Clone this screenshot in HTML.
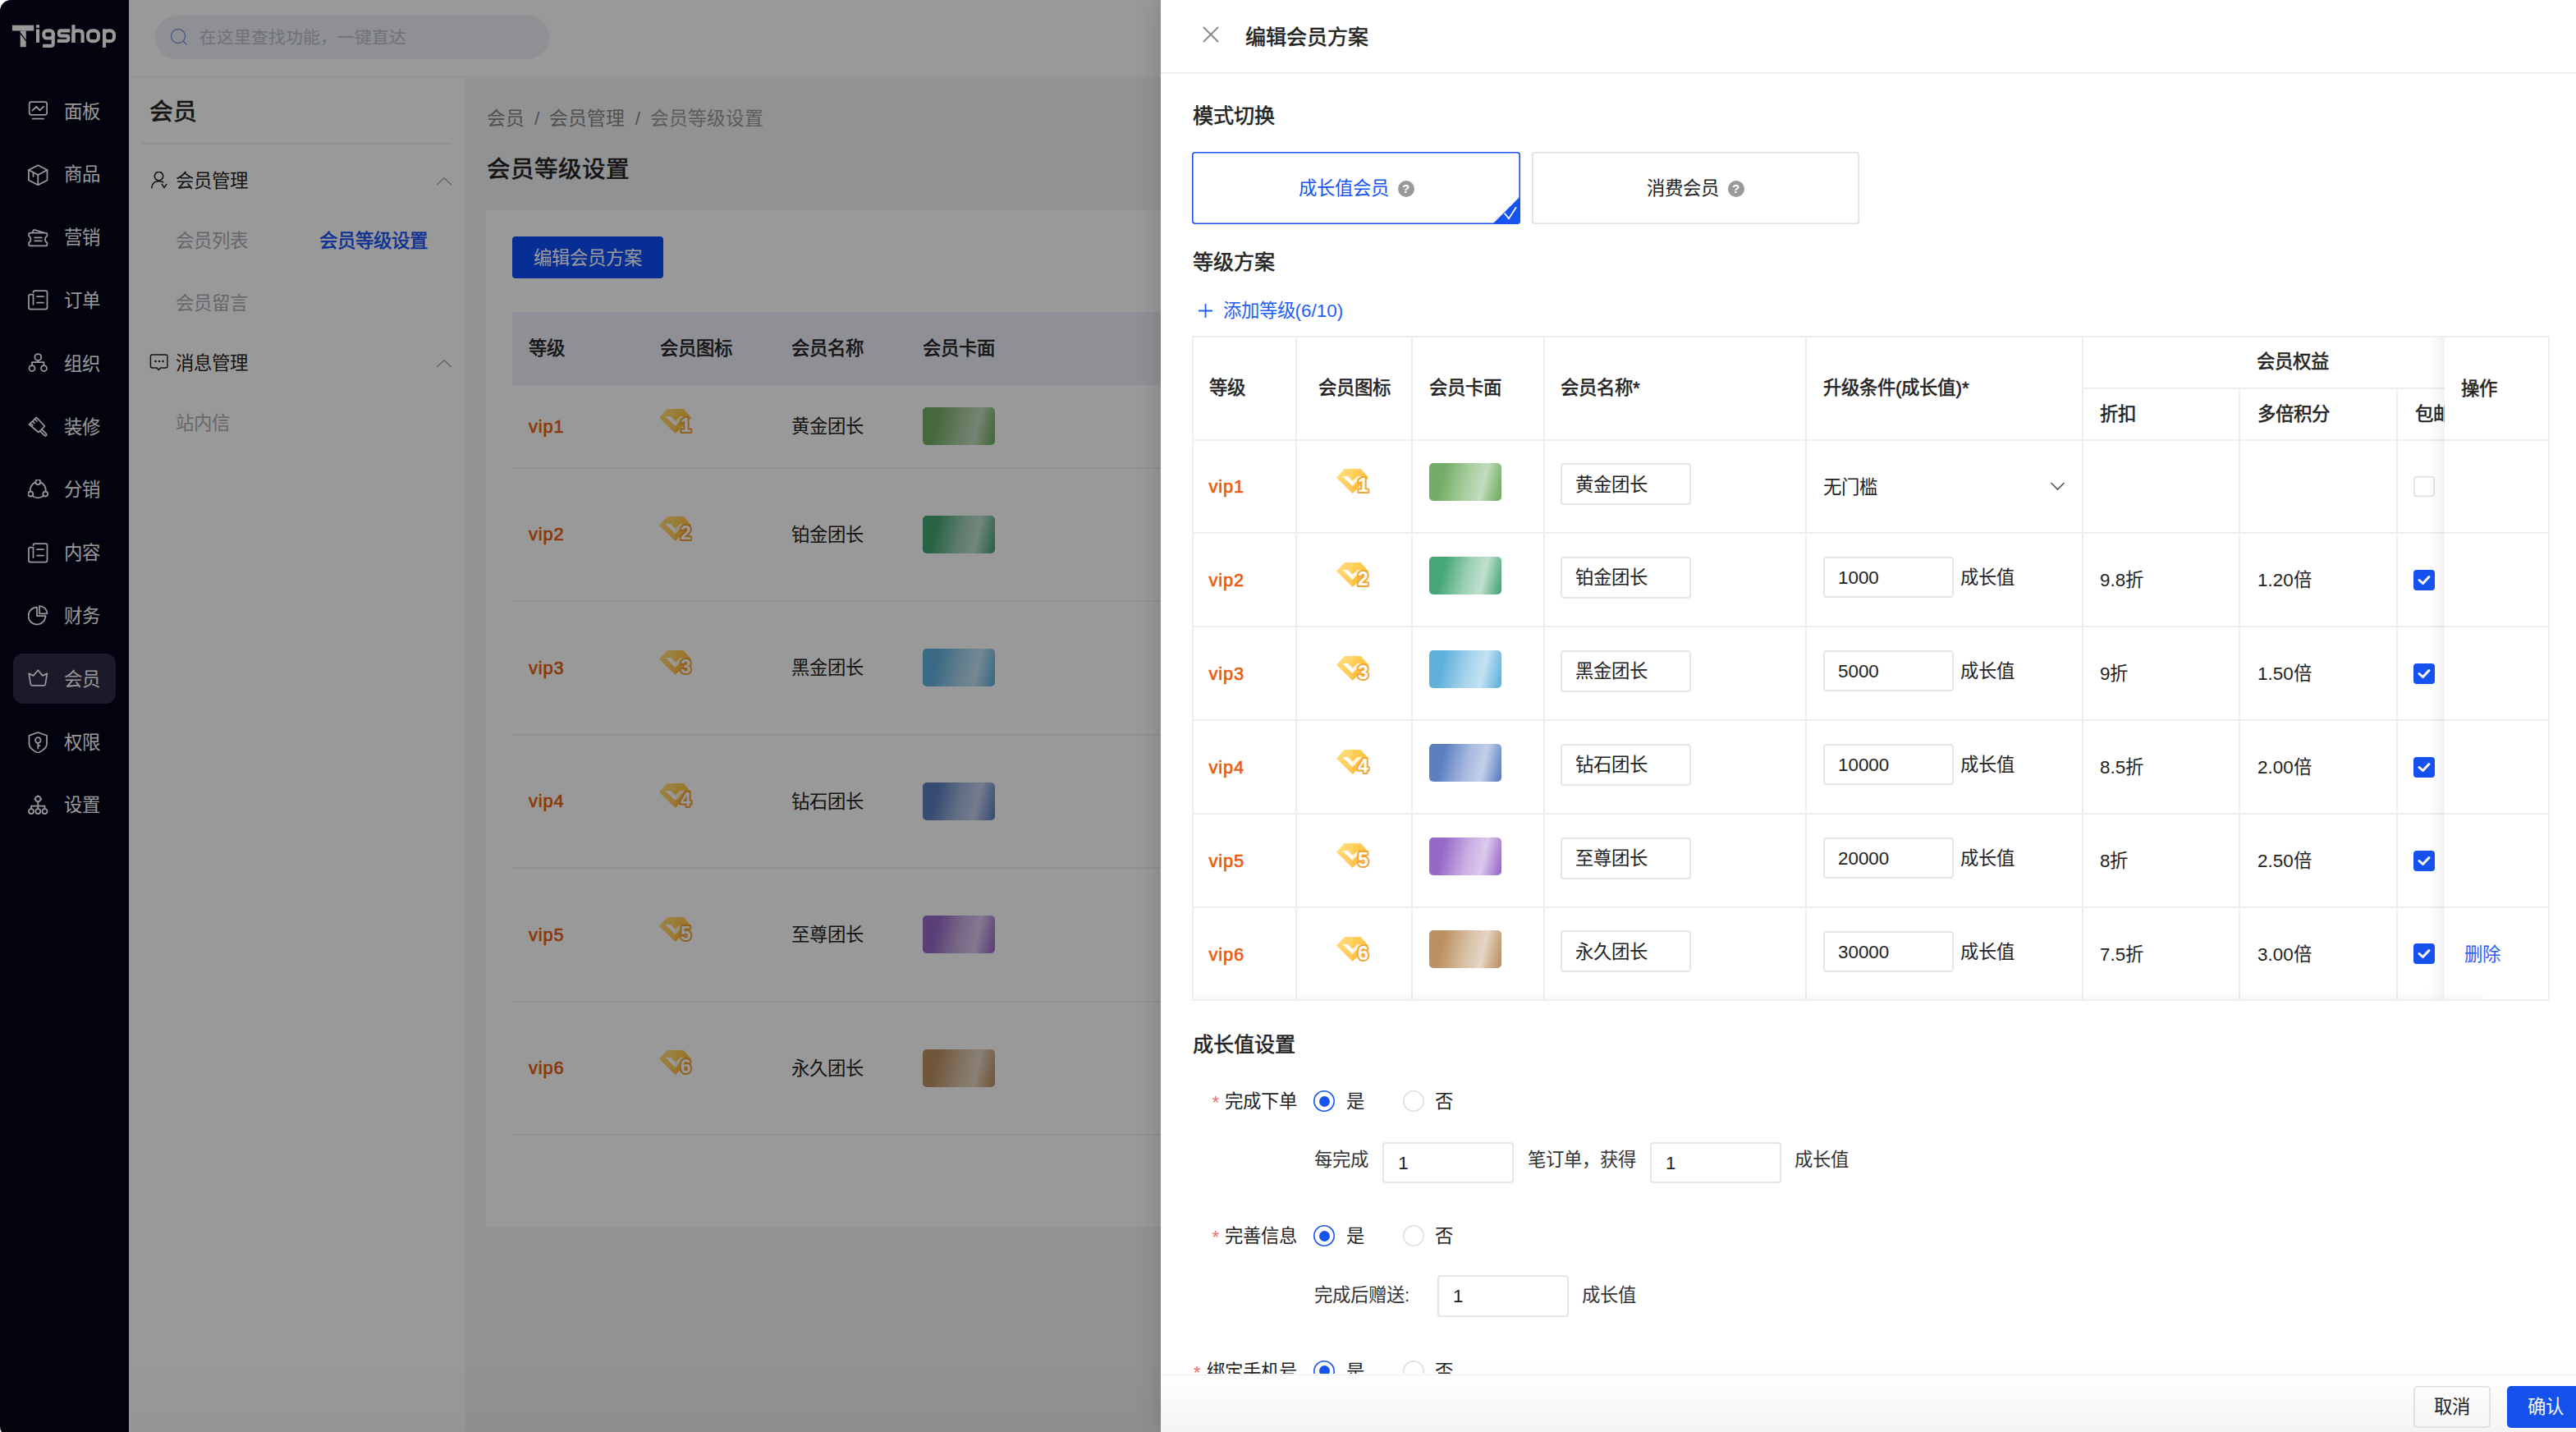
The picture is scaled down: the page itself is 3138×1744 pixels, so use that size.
<!DOCTYPE html><html lang="zh-CN"><head><meta charset="utf-8"><title>Tigshop</title><style>
*{margin:0;padding:0;box-sizing:border-box}
html,body{width:3138px;height:1744px;overflow:hidden;background:#fff}
body{font-family:"Liberation Sans",sans-serif;position:relative}
.t{position:absolute;white-space:nowrap}
.abs{position:absolute}
#app{position:absolute;left:0;top:0;width:3138px;height:1750px;overflow:hidden;border-top-left-radius:13.5px;border-bottom-left-radius:13.25px;background:#fff}
</style></head><body>
<svg width="0" height="0" style="position:absolute"><defs><linearGradient id="gemg" x1="0" y1="0" x2="1" y2="1"><stop offset="0" stop-color="#ffdc6a"/><stop offset="1" stop-color="#ffb22e"/></linearGradient></defs></svg>
<div id="app">
<div class="abs" style="left:0;top:0;width:157px;height:1744px;background:#050419"></div>
<svg class="abs" style="left:0;top:0" width="157" height="70" viewBox="0 0 157 70"><g fill="#fff"><rect x="14.9" y="30.7" width="26.35" height="6.8"/><rect x="24.7" y="37.4" width="7" height="19.8"/><rect x="44" y="30.2" width="4.1" height="3.6"/><rect x="44" y="35.4" width="4.1" height="16.5"/><rect x="87.4" y="30.2" width="4.1" height="21.7"/><rect x="125" y="35.3" width="4.1" height="22.6"/></g><path d="M24.4 39.9 L31.9 49.9" stroke="#050419" stroke-width="1.3"/><g fill="none" stroke="#fff" stroke-width="4.1"><rect x="53.35" y="37.35" width="11.4" height="9.2" rx="3.5"/><path d="M64.75 40 V53.5 Q64.75 55.85 62.4 55.85 H52.1"/><path d="M85.3 37.35 H74.2 Q71.85 37.35 71.85 39.7 V41.3 Q71.85 43.6 74.2 43.6 H80.9 Q83.25 43.6 83.25 45.9 V47.5 Q83.25 49.85 80.9 49.85 H69.8"/><path d="M89.45 51.9 V41.6 Q89.45 37.35 93.7 37.35 H96.4 Q100.65 37.35 100.65 41.6 V51.9"/><rect x="107.15" y="37.35" width="12.8" height="12.8" rx="5"/><rect x="127.05" y="37.35" width="11.9" height="12.8" rx="5"/></g></svg>
<svg class="abs" style="left:34px;top:123.0px" width="25" height="26" viewBox="0 0 25 26" fill="none" stroke="#fff" stroke-width="1.75" stroke-linecap="round" stroke-linejoin="round"><rect x="1.7" y="1.05" width="21.45" height="15.8" rx="2.5"/><path d="M5.5 11.6 L10.3 6.8 L14.5 11.3 L19.1 6.8"/><path d="M5.7 21.7 H19.1"/></svg>
<div class="t" style="left:77.5px;top:116.6px;line-height:40px;font-size:22.4px;color:#fff;font-weight:400;">面板</div>
<svg class="abs" style="left:34px;top:199.8px" width="25" height="26" viewBox="0 0 25 26" fill="none" stroke="#fff" stroke-width="1.75" stroke-linecap="round" stroke-linejoin="round"><path d="M12.3 1.2 L23.5 7 V19.5 L12.3 25.3 L1 19.5 V7 Z"/><path d="M1 7 L12.3 13 L23.5 7"/><path d="M12.3 13 V25.3"/><path d="M6.5 10 V15"/></svg>
<div class="t" style="left:77.5px;top:193.4px;line-height:40px;font-size:22.4px;color:#fff;font-weight:400;">商品</div>
<svg class="abs" style="left:34px;top:276.6px" width="25" height="26" viewBox="0 0 25 26" fill="none" stroke="#fff" stroke-width="1.75" stroke-linecap="round" stroke-linejoin="round"><path d="M3 6.6 H21.5 Q23.4 6.6 23.4 8.6 V10.5 Q21 11.6 21 14.5 Q21 17.4 23.4 18.5 V20.4 Q23.4 22.4 21.5 22.4 H3 Q1.1 22.4 1.1 20.4 V18.5 Q3.5 17.4 3.5 14.5 Q3.5 11.6 1.1 10.5 V8.6 Q1.1 6.6 3 6.6 Z"/><path d="M8.2 12.4 H16.8 M8.2 16.3 H16.8"/><path d="M5.6 6.2 Q6.3 2.8 8.4 3 L19.5 6.4"/></svg>
<div class="t" style="left:77.5px;top:270.20000000000005px;line-height:40px;font-size:22.4px;color:#fff;font-weight:400;">营销</div>
<svg class="abs" style="left:34px;top:353.4px" width="25" height="26" viewBox="0 0 25 26" fill="none" stroke="#fff" stroke-width="1.75" stroke-linecap="round" stroke-linejoin="round"><path d="M6.5 3 Q6.5 1 8.5 1 H21.5 Q23.5 1 23.5 3 V21.5 Q23.5 23.5 21.5 23.5 H3 Q1 23.5 1 21.5 V7.5 Q1 5.5 3 5.5 H6.5 V18"/><path d="M11 8.2 H19 M11 15.5 H19"/></svg>
<div class="t" style="left:77.5px;top:347.0px;line-height:40px;font-size:22.4px;color:#fff;font-weight:400;">订单</div>
<svg class="abs" style="left:34px;top:430.2px" width="25" height="26" viewBox="0 0 25 26" fill="none" stroke="#fff" stroke-width="1.75" stroke-linecap="round" stroke-linejoin="round"><circle cx="12.3" cy="5" r="4"/><circle cx="5" cy="18.5" r="3.5"/><circle cx="19.5" cy="18.5" r="3.5"/><path d="M12.3 9 V11 M5 15 V11 H19.5 V15"/></svg>
<div class="t" style="left:77.5px;top:423.8px;line-height:40px;font-size:22.4px;color:#fff;font-weight:400;">组织</div>
<svg class="abs" style="left:34px;top:507.0px" width="25" height="26" viewBox="0 0 25 26" fill="none" stroke="#fff" stroke-width="1.75" stroke-linecap="round" stroke-linejoin="round"><path d="M10.5 1.5 L20.5 12 L13 19.5 L1.5 9.8 Z"/><path d="M6 6.5 L8 8.5 M9 4 L11 6 M3.8 9.2 L5.8 11.2"/><path d="M16.8 15.8 L22.3 21.3 Q23.3 22.3 22.3 23.3 Q21.3 24.3 20.3 23.3 L14.5 17.8"/></svg>
<div class="t" style="left:77.5px;top:500.6px;line-height:40px;font-size:22.4px;color:#fff;font-weight:400;">装修</div>
<svg class="abs" style="left:34px;top:583.8px" width="25" height="26" viewBox="0 0 25 26" fill="none" stroke="#fff" stroke-width="1.75" stroke-linecap="round" stroke-linejoin="round"><path d="M9.5 3.3 A10.2 10.2 0 0 0 2.8 14.5"/><path d="M15 3.3 A10.2 10.2 0 0 1 21.7 14.5"/><path d="M5.3 19.6 A10.2 10.2 0 0 0 19.2 19.6"/><circle cx="12.3" cy="3" r="3"/><circle cx="3.3" cy="17.5" r="3"/><circle cx="21.3" cy="17.5" r="3"/></svg>
<div class="t" style="left:77.5px;top:577.4px;line-height:40px;font-size:22.4px;color:#fff;font-weight:400;">分销</div>
<svg class="abs" style="left:34px;top:660.6px" width="25" height="26" viewBox="0 0 25 26" fill="none" stroke="#fff" stroke-width="1.75" stroke-linecap="round" stroke-linejoin="round"><path d="M6.5 3 Q6.5 1 8.5 1 H21.5 Q23.5 1 23.5 3 V21.5 Q23.5 23.5 21.5 23.5 H3 Q1 23.5 1 21.5 V7.5 Q1 5.5 3 5.5 H6.5 V18"/><path d="M11 8.2 H19 M11 15.5 H19"/></svg>
<div class="t" style="left:77.5px;top:654.2px;line-height:40px;font-size:22.4px;color:#fff;font-weight:400;">内容</div>
<svg class="abs" style="left:34px;top:737.4px" width="25" height="26" viewBox="0 0 25 26" fill="none" stroke="#fff" stroke-width="1.75" stroke-linecap="round" stroke-linejoin="round"><path d="M11 2.5 A10.5 10.5 0 1 0 21.5 13 H11 Z"/><path d="M14 1 A9.5 9.5 0 0 1 23.5 10.3 H14 Z"/></svg>
<div class="t" style="left:77.5px;top:731.0px;line-height:40px;font-size:22.4px;color:#fff;font-weight:400;">财务</div>
<div class="abs" style="left:16px;top:796.1999999999999px;width:125px;height:61px;border-radius:12px;background:#2f2b46"></div>
<svg class="abs" style="left:34px;top:814.1999999999999px" width="25" height="26" viewBox="0 0 25 26" fill="none" stroke="#fff" stroke-width="1.75" stroke-linecap="round" stroke-linejoin="round"><path d="M1.2 6.4 L6.6 8.9 L12.3 2.2 L17.9 8.9 L23.4 6.4 L21.2 19.3 Q20.9 20.9 19.2 20.9 H5.4 Q3.7 20.9 3.4 19.3 Z"/></svg>
<div class="t" style="left:77.5px;top:807.8px;line-height:40px;font-size:22.4px;color:#fff;font-weight:400;">会员</div>
<svg class="abs" style="left:34px;top:891.0px" width="25" height="26" viewBox="0 0 25 26" fill="none" stroke="#fff" stroke-width="1.75" stroke-linecap="round" stroke-linejoin="round"><path d="M12.3 1 L23 4.8 V15 Q23 21 12.3 26 Q1.5 21 1.5 15 V4.8 Z"/><circle cx="12.3" cy="10.5" r="3.3"/><path d="M12.3 13.8 V20.5 M12.3 17 H14.5"/></svg>
<div class="t" style="left:77.5px;top:884.6px;line-height:40px;font-size:22.4px;color:#fff;font-weight:400;">权限</div>
<svg class="abs" style="left:34px;top:967.8px" width="25" height="26" viewBox="0 0 25 26" fill="none" stroke="#fff" stroke-width="1.75" stroke-linecap="round" stroke-linejoin="round"><circle cx="12.3" cy="5" r="3.2"/><path d="M12.3 1 V2 M12.3 8.2 V9.2 M8.2 5 H9.2 M15.5 5 H16.4"/><path d="M12.3 9.5 V13.5 M4 17 V13.5 H20.5 V17 M12.3 13.5 V17"/><circle cx="4" cy="20" r="3"/><circle cx="12.3" cy="20" r="3"/><circle cx="20.5" cy="20" r="3"/></svg>
<div class="t" style="left:77.5px;top:961.4px;line-height:40px;font-size:22.4px;color:#fff;font-weight:400;">设置</div>
<div class="abs" style="left:157px;top:0;width:2981px;height:94px;background:#fff;border-bottom:1.5px solid #f0f1f3"></div>
<div class="abs" style="left:189px;top:19px;width:480px;height:53px;border-radius:27px;background:#eef1f6"></div>
<svg class="abs" style="left:205px;top:32px" width="26" height="26" viewBox="0 0 26 26" fill="none" stroke="#809de2" stroke-width="1.5" stroke-linecap="round"><circle cx="12" cy="12" r="8.5"/><path d="M18.3 18.3 L22 22"/></svg>
<div class="t" style="left:243px;top:25.6px;line-height:40px;font-size:20.8px;color:#bcbfc5;font-weight:400;">在这里查找功能，一键直达</div>
<div class="abs" style="left:157px;top:95px;width:409px;height:1649px;background:#fff"></div>
<div class="t" style="left:182px;top:115.6px;line-height:40px;font-size:28.8px;color:#222;font-weight:400;-webkit-text-stroke:0.65px #222;">会员</div>
<div class="abs" style="left:173px;top:174px;width:377px;height:2px;background:#f1f1f1"></div>
<svg class="abs" style="left:183px;top:209px" width="22" height="24" viewBox="0 0 22 24" fill="none" stroke="#222" stroke-width="1.6" stroke-linecap="round" stroke-linejoin="round"><circle cx="10.5" cy="5.6" r="5.2"/><path d="M1.9 19.9 Q2.3 11.7 10.3 11.7 Q13.6 11.7 15.6 12.8"/><path d="M14.3 15.4 L17 19.6 L19.9 15.4"/></svg>
<div class="t" style="left:214px;top:201.1px;line-height:40px;font-size:22.4px;color:#222;font-weight:400;">会员管理</div>
<svg class="abs" style="left:530px;top:213.5px" width="22" height="14" viewBox="0 0 22 14" fill="none" stroke="#a8a8ac" stroke-width="1.4"><path d="M2.2 11 L11 2.8 L19.8 11"/></svg>
<div class="t" style="left:214px;top:274.1px;line-height:40px;font-size:22.4px;color:#a9adb5;font-weight:400;">会员列表</div>
<div class="t" style="left:389px;top:274.1px;line-height:40px;font-size:22.4px;color:#1652f5;font-weight:400;-webkit-text-stroke:0.55px #1652f5;">会员等级设置</div>
<div class="t" style="left:214px;top:350.1px;line-height:40px;font-size:22.4px;color:#a9adb5;font-weight:400;">会员留言</div>
<svg class="abs" style="left:182px;top:430px" width="24" height="24" viewBox="0 0 24 24" fill="none" stroke="#222" stroke-width="1.5" stroke-linejoin="round"><path d="M3.4 2 H20 Q21.9 2 21.9 4 V16 Q21.9 17.9 20 17.9 H13.9 L11.3 20.4 L8.7 17.9 H3.4 Q1.4 17.9 1.4 16 V4 Q1.4 2 3.4 2 Z"/><circle cx="7.5" cy="10" r="0.6" fill="#222"/><circle cx="12" cy="10" r="0.6" fill="#222"/><circle cx="16.5" cy="10" r="0.6" fill="#222"/></svg>
<div class="t" style="left:214px;top:422.6px;line-height:40px;font-size:22.4px;color:#222;font-weight:400;">消息管理</div>
<svg class="abs" style="left:530px;top:435.5px" width="22" height="14" viewBox="0 0 22 14" fill="none" stroke="#a8a8ac" stroke-width="1.4"><path d="M2.2 11 L11 2.8 L19.8 11"/></svg>
<div class="t" style="left:214px;top:496.1px;line-height:40px;font-size:22.4px;color:#a9adb5;font-weight:400;">站内信</div>
<div class="abs" style="left:566px;top:95px;width:2572px;height:1649px;background:#f2f3f5"></div>
<div class="t" style="left:592.5px;top:124.29999999999998px;line-height:40px;font-size:22.8px;color:#858585;font-weight:400;">会员<span style="display:inline-block;width:12.5px"></span>/<span style="display:inline-block;width:11.5px"></span>会员管理<span style="display:inline-block;width:13px"></span>/<span style="display:inline-block;width:11.5px"></span><span style="color:#9a9a9a">会员等级设置</span></div>
<div class="t" style="left:592.5px;top:185.6px;line-height:40px;font-size:28.5px;color:#222;font-weight:400;-webkit-text-stroke:0.65px #222;">会员等级设置</div>
<div class="abs" style="left:592px;top:255.5px;width:2546px;height:1238.5px;background:#fff"></div>
<div class="abs" style="left:624px;top:288px;width:184px;height:51px;border-radius:4px;background:#0d4ef7"></div>
<div class="t" style="left:650px;top:294.6px;line-height:40px;font-size:22.4px;color:#fff;font-weight:400;">编辑会员方案</div>
<div class="abs" style="left:624px;top:380px;width:2514px;height:89px;background:#edf0f8"></div>
<div class="t" style="left:644px;top:405.1px;line-height:40px;font-size:22.4px;color:#222;font-weight:400;-webkit-text-stroke:0.55px #222;">等级</div>
<div class="t" style="left:804px;top:405.1px;line-height:40px;font-size:22.4px;color:#222;font-weight:400;-webkit-text-stroke:0.55px #222;">会员图标</div>
<div class="t" style="left:964px;top:405.1px;line-height:40px;font-size:22.4px;color:#222;font-weight:400;-webkit-text-stroke:0.55px #222;">会员名称</div>
<div class="t" style="left:1124px;top:405.1px;line-height:40px;font-size:22.4px;color:#222;font-weight:400;-webkit-text-stroke:0.55px #222;">会员卡面</div>
<div class="abs" style="left:624px;top:568.5px;width:2514px;height:2px;background:#eff0f2"></div>
<div class="t" style="left:644px;top:499.85px;line-height:40px;font-size:21.8px;color:#ea5c10;font-weight:400;-webkit-text-stroke:0.65px #ea5c10;letter-spacing:0.9px;">vip1</div>
<svg class="abs" style="left:803px;top:497.75px;overflow:visible" width="42" height="32" viewBox="0 0 42 32"><path d="M9.8 0 H29.6 L39.2 10.65 L19.6 30 L0 10.65 Z" fill="url(#gemg)"/><path d="M9.8 0 H19.6 V30 L0 10.65 Z" fill="#fff" fill-opacity="0.12"/><path d="M7.5 9.1 H14 L19.55 14.8 L25.8 9.1 H30.7 L19.55 21.1 Z" fill="#fff"/><path d="M19.55 14.8 L25.8 9.1 H30.7 L19.55 21.1 Z" fill="#fff4d8"/><text x="32.5" y="27.6" text-anchor="middle" style="font-family:'Liberation Sans',sans-serif;font-weight:700;font-size:23.3px" fill="#fff" stroke="#f3a431" stroke-width="4" stroke-linejoin="round" paint-order="stroke">1</text></svg>
<div class="t" style="left:964px;top:500.35px;line-height:40px;font-size:22.4px;color:#222;font-weight:400;">黄金团长</div>
<div class="abs" style="left:1124px;top:496.25px;width:88px;height:46px;border-radius:5px;background:linear-gradient(103deg,#73ad66 0%,#73ad66 20%,#a9cd9f 52%,#c3dcc0 73%,#a9cd9f 80%,#6aa85c 100%)"></div>
<div class="abs" style="left:624px;top:731.0px;width:2514px;height:2px;background:#eff0f2"></div>
<div class="t" style="left:644px;top:631.35px;line-height:40px;font-size:21.8px;color:#ea5c10;font-weight:400;-webkit-text-stroke:0.65px #ea5c10;letter-spacing:0.9px;">vip2</div>
<svg class="abs" style="left:803px;top:629.25px;overflow:visible" width="42" height="32" viewBox="0 0 42 32"><path d="M9.8 0 H29.6 L39.2 10.65 L19.6 30 L0 10.65 Z" fill="url(#gemg)"/><path d="M9.8 0 H19.6 V30 L0 10.65 Z" fill="#fff" fill-opacity="0.12"/><path d="M7.5 9.1 H14 L19.55 14.8 L25.8 9.1 H30.7 L19.55 21.1 Z" fill="#fff"/><path d="M19.55 14.8 L25.8 9.1 H30.7 L19.55 21.1 Z" fill="#fff4d8"/><text x="32.5" y="27.6" text-anchor="middle" style="font-family:'Liberation Sans',sans-serif;font-weight:700;font-size:23.3px" fill="#fff" stroke="#f3a431" stroke-width="4" stroke-linejoin="round" paint-order="stroke">2</text></svg>
<div class="t" style="left:964px;top:631.85px;line-height:40px;font-size:22.4px;color:#222;font-weight:400;">铂金团长</div>
<div class="abs" style="left:1124px;top:627.75px;width:88px;height:46px;border-radius:5px;background:linear-gradient(103deg,#45a676 0%,#45a676 20%,#9ccfb4 52%,#bfe0cf 73%,#9ccfb4 80%,#3f9f6e 100%)"></div>
<div class="abs" style="left:624px;top:893.5px;width:2514px;height:2px;background:#eff0f2"></div>
<div class="t" style="left:644px;top:793.85px;line-height:40px;font-size:21.8px;color:#ea5c10;font-weight:400;-webkit-text-stroke:0.65px #ea5c10;letter-spacing:0.9px;">vip3</div>
<svg class="abs" style="left:803px;top:791.75px;overflow:visible" width="42" height="32" viewBox="0 0 42 32"><path d="M9.8 0 H29.6 L39.2 10.65 L19.6 30 L0 10.65 Z" fill="url(#gemg)"/><path d="M9.8 0 H19.6 V30 L0 10.65 Z" fill="#fff" fill-opacity="0.12"/><path d="M7.5 9.1 H14 L19.55 14.8 L25.8 9.1 H30.7 L19.55 21.1 Z" fill="#fff"/><path d="M19.55 14.8 L25.8 9.1 H30.7 L19.55 21.1 Z" fill="#fff4d8"/><text x="32.5" y="27.6" text-anchor="middle" style="font-family:'Liberation Sans',sans-serif;font-weight:700;font-size:23.3px" fill="#fff" stroke="#f3a431" stroke-width="4" stroke-linejoin="round" paint-order="stroke">3</text></svg>
<div class="t" style="left:964px;top:794.35px;line-height:40px;font-size:22.4px;color:#222;font-weight:400;">黑金团长</div>
<div class="abs" style="left:1124px;top:790.25px;width:88px;height:46px;border-radius:5px;background:linear-gradient(103deg,#5fb0dc 0%,#5fb0dc 20%,#a5d3ec 52%,#c3e2f3 73%,#a5d3ec 80%,#58abd9 100%)"></div>
<div class="abs" style="left:624px;top:1056.0px;width:2514px;height:2px;background:#eff0f2"></div>
<div class="t" style="left:644px;top:956.35px;line-height:40px;font-size:21.8px;color:#ea5c10;font-weight:400;-webkit-text-stroke:0.65px #ea5c10;letter-spacing:0.9px;">vip4</div>
<svg class="abs" style="left:803px;top:954.25px;overflow:visible" width="42" height="32" viewBox="0 0 42 32"><path d="M9.8 0 H29.6 L39.2 10.65 L19.6 30 L0 10.65 Z" fill="url(#gemg)"/><path d="M9.8 0 H19.6 V30 L0 10.65 Z" fill="#fff" fill-opacity="0.12"/><path d="M7.5 9.1 H14 L19.55 14.8 L25.8 9.1 H30.7 L19.55 21.1 Z" fill="#fff"/><path d="M19.55 14.8 L25.8 9.1 H30.7 L19.55 21.1 Z" fill="#fff4d8"/><text x="32.5" y="27.6" text-anchor="middle" style="font-family:'Liberation Sans',sans-serif;font-weight:700;font-size:23.3px" fill="#fff" stroke="#f3a431" stroke-width="4" stroke-linejoin="round" paint-order="stroke">4</text></svg>
<div class="t" style="left:964px;top:956.85px;line-height:40px;font-size:22.4px;color:#222;font-weight:400;">钻石团长</div>
<div class="abs" style="left:1124px;top:952.75px;width:88px;height:46px;border-radius:5px;background:linear-gradient(103deg,#5c7fc0 0%,#5c7fc0 20%,#a6b9df 52%,#c3cfea 73%,#a6b9df 80%,#5677bb 100%)"></div>
<div class="abs" style="left:624px;top:1218.5px;width:2514px;height:2px;background:#eff0f2"></div>
<div class="t" style="left:644px;top:1118.85px;line-height:40px;font-size:21.8px;color:#ea5c10;font-weight:400;-webkit-text-stroke:0.65px #ea5c10;letter-spacing:0.9px;">vip5</div>
<svg class="abs" style="left:803px;top:1116.75px;overflow:visible" width="42" height="32" viewBox="0 0 42 32"><path d="M9.8 0 H29.6 L39.2 10.65 L19.6 30 L0 10.65 Z" fill="url(#gemg)"/><path d="M9.8 0 H19.6 V30 L0 10.65 Z" fill="#fff" fill-opacity="0.12"/><path d="M7.5 9.1 H14 L19.55 14.8 L25.8 9.1 H30.7 L19.55 21.1 Z" fill="#fff"/><path d="M19.55 14.8 L25.8 9.1 H30.7 L19.55 21.1 Z" fill="#fff4d8"/><text x="32.5" y="27.6" text-anchor="middle" style="font-family:'Liberation Sans',sans-serif;font-weight:700;font-size:23.3px" fill="#fff" stroke="#f3a431" stroke-width="4" stroke-linejoin="round" paint-order="stroke">5</text></svg>
<div class="t" style="left:964px;top:1119.35px;line-height:40px;font-size:22.4px;color:#222;font-weight:400;">至尊团长</div>
<div class="abs" style="left:1124px;top:1115.25px;width:88px;height:46px;border-radius:5px;background:linear-gradient(103deg,#9769c7 0%,#9769c7 20%,#c8aee2 52%,#dcc9ee 73%,#c8aee2 80%,#9462c4 100%)"></div>
<div class="abs" style="left:624px;top:1381.0px;width:2514px;height:2px;background:#eff0f2"></div>
<div class="t" style="left:644px;top:1281.35px;line-height:40px;font-size:21.8px;color:#ea5c10;font-weight:400;-webkit-text-stroke:0.65px #ea5c10;letter-spacing:0.9px;">vip6</div>
<svg class="abs" style="left:803px;top:1279.25px;overflow:visible" width="42" height="32" viewBox="0 0 42 32"><path d="M9.8 0 H29.6 L39.2 10.65 L19.6 30 L0 10.65 Z" fill="url(#gemg)"/><path d="M9.8 0 H19.6 V30 L0 10.65 Z" fill="#fff" fill-opacity="0.12"/><path d="M7.5 9.1 H14 L19.55 14.8 L25.8 9.1 H30.7 L19.55 21.1 Z" fill="#fff"/><path d="M19.55 14.8 L25.8 9.1 H30.7 L19.55 21.1 Z" fill="#fff4d8"/><text x="32.5" y="27.6" text-anchor="middle" style="font-family:'Liberation Sans',sans-serif;font-weight:700;font-size:23.3px" fill="#fff" stroke="#f3a431" stroke-width="4" stroke-linejoin="round" paint-order="stroke">6</text></svg>
<div class="t" style="left:964px;top:1281.85px;line-height:40px;font-size:22.4px;color:#222;font-weight:400;">永久团长</div>
<div class="abs" style="left:1124px;top:1277.75px;width:88px;height:46px;border-radius:5px;background:linear-gradient(103deg,#bc9161 0%,#bc9161 20%,#d8c0a4 52%,#e5d6c6 73%,#d8c0a4 80%,#b78b5b 100%)"></div>
<div class="abs" style="left:0;top:0;width:3138px;height:1744px;background:rgba(0,0,0,0.4)"></div>
<div class="abs" style="left:1414px;top:0;width:1724px;height:1744px;background:#fff;box-shadow:-6px 0 24px rgba(0,0,0,0.12)">
<svg class="abs" style="left:51px;top:32px" width="20" height="20" viewBox="0 0 20 20" fill="none" stroke="#8a8a8a" stroke-width="1.9"><path d="M1 1 L19 19 M19 1 L1 19"/></svg>
<div class="t" style="left:103px;top:25.1px;line-height:40px;font-size:25.0px;color:#222;font-weight:400;-webkit-text-stroke:0.55px #222;">编辑会员方案</div>
<div class="abs" style="left:0;top:88px;width:1724px;height:1.5px;background:#eceef1"></div>
<div class="t" style="left:39px;top:121.1px;line-height:40px;font-size:25.1px;color:#222;font-weight:400;-webkit-text-stroke:0.55px #222;">模式切换</div>
<div class="abs" style="left:38px;top:185px;width:400px;height:88px;box-shadow:inset 0 0 0 1.6px #1654f0;border-radius:4px;overflow:hidden"><svg class="abs" style="right:0;bottom:0" width="34" height="34" viewBox="0 0 34 34"><path d="M34 0 V34 H0 Z" fill="#1654f0"/><path d="M14.6 20.4 L20 27.3 L29 13.3" fill="none" stroke="#fff" stroke-width="1.7"/></svg></div>
<div class="t" style="left:168px;top:210.1px;line-height:40px;font-size:22.4px;color:#1654f0;font-weight:400;">成长值会员</div>
<div class="abs" style="left:288.5px;top:219.5px;width:20px;height:20px;border-radius:50%;background:#999;color:#fff;font-size:15px;font-weight:700;line-height:20px;text-align:center">?</div>
<div class="abs" style="left:451.5px;top:185px;width:399px;height:88px;box-shadow:inset 0 0 0 1.6px #dcdfe8;border-radius:4px"></div>
<div class="t" style="left:592px;top:210.1px;line-height:40px;font-size:22.4px;color:#222;font-weight:400;">消费会员</div>
<div class="abs" style="left:690.5px;top:219.5px;width:20px;height:20px;border-radius:50%;background:#999;color:#fff;font-size:15px;font-weight:700;line-height:20px;text-align:center">?</div>
<div class="t" style="left:39px;top:299.1px;line-height:40px;font-size:25.1px;color:#222;font-weight:400;-webkit-text-stroke:0.55px #222;">等级方案</div>
<svg class="abs" style="left:45px;top:369px" width="19" height="19" viewBox="0 0 19 19" fill="none" stroke="#1f5ef5" stroke-width="1.8"><path d="M9.5 1 V18 M1 9.5 H18"/></svg>
<div class="t" style="left:75.59999999999991px;top:358.6px;line-height:40px;font-size:22.4px;color:#1f5ef5;font-weight:400;">添加等级(6/10)</div>
<div class="abs" style="left:38px;top:409px;width:1654px;height:810px;border:2px solid #eceef4;overflow:hidden">
<div class="abs" style="left:124px;top:0;width:2px;height:810px;background:#eceef4"></div>
<div class="abs" style="left:265px;top:0;width:2px;height:810px;background:#eceef4"></div>
<div class="abs" style="left:425.5999999999999px;top:0;width:2px;height:810px;background:#eceef4"></div>
<div class="abs" style="left:745px;top:0;width:2px;height:810px;background:#eceef4"></div>
<div class="abs" style="left:1273px;top:61.5px;width:2px;height:746.5px;background:#eceef4"></div>
<div class="abs" style="left:1465px;top:61.5px;width:2px;height:746.5px;background:#eceef4"></div>
<div class="abs" style="left:1081.5px;top:0;width:2px;height:810px;background:#eceef4"></div>
<div class="abs" style="left:1082.5px;top:60.5px;width:600px;height:2px;background:#eceef4"></div>
<div class="abs" style="left:0;top:123.5px;width:1700px;height:2px;background:#eceef4"></div>
<div class="abs" style="left:0;top:237.39999999999998px;width:1700px;height:2px;background:#eceef4"></div>
<div class="abs" style="left:0;top:351.29999999999995px;width:1700px;height:2px;background:#eceef4"></div>
<div class="abs" style="left:0;top:465.20000000000005px;width:1700px;height:2px;background:#eceef4"></div>
<div class="abs" style="left:0;top:579.1px;width:1700px;height:2px;background:#eceef4"></div>
<div class="abs" style="left:0;top:693.0px;width:1700px;height:2px;background:#eceef4"></div>
<div class="t" style="left:19px;top:42.1px;line-height:40px;font-size:22.4px;color:#222;font-weight:400;-webkit-text-stroke:0.55px #222;">等级</div>
<div class="t" style="left:152px;top:42.1px;line-height:40px;font-size:22.4px;color:#222;font-weight:400;-webkit-text-stroke:0.55px #222;">会员图标</div>
<div class="t" style="left:287px;top:42.1px;line-height:40px;font-size:22.4px;color:#222;font-weight:400;-webkit-text-stroke:0.55px #222;">会员卡面</div>
<div class="t" style="left:447px;top:42.1px;line-height:40px;font-size:22.4px;color:#222;font-weight:400;-webkit-text-stroke:0.55px #222;">会员名称*</div>
<div class="t" style="left:767px;top:42.1px;line-height:40px;font-size:22.4px;color:#222;font-weight:400;-webkit-text-stroke:0.55px #222;">升级条件(成长值)*</div>
<div class="t" style="left:1295px;top:10.1px;line-height:40px;font-size:22.4px;color:#222;font-weight:400;-webkit-text-stroke:0.55px #222;">会员权益</div>
<div class="t" style="left:1104px;top:74.1px;line-height:40px;font-size:22.4px;color:#222;font-weight:400;-webkit-text-stroke:0.55px #222;">折扣</div>
<div class="t" style="left:1296px;top:74.1px;line-height:40px;font-size:22.4px;color:#222;font-weight:400;-webkit-text-stroke:0.55px #222;">多倍积分</div>
<div class="t" style="left:1487.5px;top:74.1px;line-height:40px;font-size:22.4px;color:#222;font-weight:400;-webkit-text-stroke:0.55px #222;">包邮</div>
<div class="t" style="left:18.40000000000009px;top:162.05000000000004px;line-height:40px;font-size:21.8px;color:#ea5c10;font-weight:400;-webkit-text-stroke:0.65px #ea5c10;letter-spacing:0.9px;">vip1</div>
<svg class="abs" style="left:174.4000000000001px;top:160.40000000000003px;overflow:visible" width="42" height="32" viewBox="0 0 42 32"><path d="M9.8 0 H29.6 L39.2 10.65 L19.6 30 L0 10.65 Z" fill="url(#gemg)"/><path d="M9.8 0 H19.6 V30 L0 10.65 Z" fill="#fff" fill-opacity="0.12"/><path d="M7.5 9.1 H14 L19.55 14.8 L25.8 9.1 H30.7 L19.55 21.1 Z" fill="#fff"/><path d="M19.55 14.8 L25.8 9.1 H30.7 L19.55 21.1 Z" fill="#fff4d8"/><text x="32.5" y="27.6" text-anchor="middle" style="font-family:'Liberation Sans',sans-serif;font-weight:700;font-size:23.3px" fill="#fff" stroke="#f3a431" stroke-width="4" stroke-linejoin="round" paint-order="stroke">1</text></svg>
<div class="abs" style="left:287px;top:152.95000000000005px;width:88px;height:46px;border-radius:5px;background:linear-gradient(103deg,#73ad66 0%,#73ad66 20%,#a9cd9f 52%,#c3dcc0 73%,#a9cd9f 80%,#6aa85c 100%)"></div>
<div class="abs" style="left:446.5px;top:152.95000000000005px;width:159.5px;height:51px;border:2px solid #e3e6ed;border-radius:4px"></div>
<div class="t" style="left:464.70000000000005px;top:159.55000000000004px;line-height:40px;font-size:22.4px;color:#222;font-weight:400;">黄金团长</div>
<div class="t" style="left:767px;top:162.55000000000004px;line-height:40px;font-size:22.4px;color:#222;font-weight:400;">无门槛</div>
<svg class="abs" style="left:1043px;top:175.45000000000005px" width="19" height="12" viewBox="0 0 19 12" fill="none" stroke="#555" stroke-width="1.7"><path d="M1.5 2 L9.5 10 L17.5 2"/></svg>
<div class="abs" style="left:1486px;top:168.95000000000005px;width:26px;height:25px;box-shadow:inset 0 0 0 1.6px #dcdfe6;border-radius:4px;background:#fff"></div>
<div class="t" style="left:18.40000000000009px;top:275.94999999999993px;line-height:40px;font-size:21.8px;color:#ea5c10;font-weight:400;-webkit-text-stroke:0.65px #ea5c10;letter-spacing:0.9px;">vip2</div>
<svg class="abs" style="left:174.4000000000001px;top:274.2999999999999px;overflow:visible" width="42" height="32" viewBox="0 0 42 32"><path d="M9.8 0 H29.6 L39.2 10.65 L19.6 30 L0 10.65 Z" fill="url(#gemg)"/><path d="M9.8 0 H19.6 V30 L0 10.65 Z" fill="#fff" fill-opacity="0.12"/><path d="M7.5 9.1 H14 L19.55 14.8 L25.8 9.1 H30.7 L19.55 21.1 Z" fill="#fff"/><path d="M19.55 14.8 L25.8 9.1 H30.7 L19.55 21.1 Z" fill="#fff4d8"/><text x="32.5" y="27.6" text-anchor="middle" style="font-family:'Liberation Sans',sans-serif;font-weight:700;font-size:23.3px" fill="#fff" stroke="#f3a431" stroke-width="4" stroke-linejoin="round" paint-order="stroke">2</text></svg>
<div class="abs" style="left:287px;top:266.8499999999999px;width:88px;height:46px;border-radius:5px;background:linear-gradient(103deg,#45a676 0%,#45a676 20%,#9ccfb4 52%,#bfe0cf 73%,#9ccfb4 80%,#3f9f6e 100%)"></div>
<div class="abs" style="left:446.5px;top:266.8499999999999px;width:159.5px;height:51px;border:2px solid #e3e6ed;border-radius:4px"></div>
<div class="t" style="left:464.70000000000005px;top:273.44999999999993px;line-height:40px;font-size:22.4px;color:#222;font-weight:400;">铂金团长</div>
<div class="abs" style="left:766.5px;top:267.3499999999999px;width:159px;height:50px;border:2px solid #e3e6ed;border-radius:4px"></div>
<div class="t" style="left:785px;top:273.44999999999993px;line-height:40px;font-size:22.4px;color:#222;font-weight:400;">1000</div>
<div class="t" style="left:933.5999999999999px;top:273.44999999999993px;line-height:40px;font-size:22.4px;color:#222;font-weight:400;">成长值</div>
<div class="t" style="left:1104px;top:276.44999999999993px;line-height:40px;font-size:22.4px;color:#222;font-weight:400;">9.8折</div>
<div class="t" style="left:1296px;top:276.44999999999993px;line-height:40px;font-size:22.4px;color:#222;font-weight:400;">1.20倍</div>
<div class="abs" style="left:1486px;top:282.8499999999999px;width:26px;height:25px;border-radius:4px;background:#1651f0"></div>
<svg class="abs" style="left:1490px;top:286.8499999999999px" width="18" height="17" viewBox="0 0 18 17" fill="none" stroke="#fff" stroke-width="3" stroke-linecap="round" stroke-linejoin="round"><path d="M3 8.5 L7.5 12.5 L15 4.5"/></svg>
<div class="t" style="left:18.40000000000009px;top:389.85px;line-height:40px;font-size:21.8px;color:#ea5c10;font-weight:400;-webkit-text-stroke:0.65px #ea5c10;letter-spacing:0.9px;">vip3</div>
<svg class="abs" style="left:174.4000000000001px;top:388.2px;overflow:visible" width="42" height="32" viewBox="0 0 42 32"><path d="M9.8 0 H29.6 L39.2 10.65 L19.6 30 L0 10.65 Z" fill="url(#gemg)"/><path d="M9.8 0 H19.6 V30 L0 10.65 Z" fill="#fff" fill-opacity="0.12"/><path d="M7.5 9.1 H14 L19.55 14.8 L25.8 9.1 H30.7 L19.55 21.1 Z" fill="#fff"/><path d="M19.55 14.8 L25.8 9.1 H30.7 L19.55 21.1 Z" fill="#fff4d8"/><text x="32.5" y="27.6" text-anchor="middle" style="font-family:'Liberation Sans',sans-serif;font-weight:700;font-size:23.3px" fill="#fff" stroke="#f3a431" stroke-width="4" stroke-linejoin="round" paint-order="stroke">3</text></svg>
<div class="abs" style="left:287px;top:380.75px;width:88px;height:46px;border-radius:5px;background:linear-gradient(103deg,#5fb0dc 0%,#5fb0dc 20%,#a5d3ec 52%,#c3e2f3 73%,#a5d3ec 80%,#58abd9 100%)"></div>
<div class="abs" style="left:446.5px;top:380.75px;width:159.5px;height:51px;border:2px solid #e3e6ed;border-radius:4px"></div>
<div class="t" style="left:464.70000000000005px;top:387.35px;line-height:40px;font-size:22.4px;color:#222;font-weight:400;">黑金团长</div>
<div class="abs" style="left:766.5px;top:381.25px;width:159px;height:50px;border:2px solid #e3e6ed;border-radius:4px"></div>
<div class="t" style="left:785px;top:387.35px;line-height:40px;font-size:22.4px;color:#222;font-weight:400;">5000</div>
<div class="t" style="left:933.5999999999999px;top:387.35px;line-height:40px;font-size:22.4px;color:#222;font-weight:400;">成长值</div>
<div class="t" style="left:1104px;top:390.35px;line-height:40px;font-size:22.4px;color:#222;font-weight:400;">9折</div>
<div class="t" style="left:1296px;top:390.35px;line-height:40px;font-size:22.4px;color:#222;font-weight:400;">1.50倍</div>
<div class="abs" style="left:1486px;top:396.75px;width:26px;height:25px;border-radius:4px;background:#1651f0"></div>
<svg class="abs" style="left:1490px;top:400.75px" width="18" height="17" viewBox="0 0 18 17" fill="none" stroke="#fff" stroke-width="3" stroke-linecap="round" stroke-linejoin="round"><path d="M3 8.5 L7.5 12.5 L15 4.5"/></svg>
<div class="t" style="left:18.40000000000009px;top:503.7500000000001px;line-height:40px;font-size:21.8px;color:#ea5c10;font-weight:400;-webkit-text-stroke:0.65px #ea5c10;letter-spacing:0.9px;">vip4</div>
<svg class="abs" style="left:174.4000000000001px;top:502.1000000000001px;overflow:visible" width="42" height="32" viewBox="0 0 42 32"><path d="M9.8 0 H29.6 L39.2 10.65 L19.6 30 L0 10.65 Z" fill="url(#gemg)"/><path d="M9.8 0 H19.6 V30 L0 10.65 Z" fill="#fff" fill-opacity="0.12"/><path d="M7.5 9.1 H14 L19.55 14.8 L25.8 9.1 H30.7 L19.55 21.1 Z" fill="#fff"/><path d="M19.55 14.8 L25.8 9.1 H30.7 L19.55 21.1 Z" fill="#fff4d8"/><text x="32.5" y="27.6" text-anchor="middle" style="font-family:'Liberation Sans',sans-serif;font-weight:700;font-size:23.3px" fill="#fff" stroke="#f3a431" stroke-width="4" stroke-linejoin="round" paint-order="stroke">4</text></svg>
<div class="abs" style="left:287px;top:494.6500000000001px;width:88px;height:46px;border-radius:5px;background:linear-gradient(103deg,#5c7fc0 0%,#5c7fc0 20%,#a6b9df 52%,#c3cfea 73%,#a6b9df 80%,#5677bb 100%)"></div>
<div class="abs" style="left:446.5px;top:494.6500000000001px;width:159.5px;height:51px;border:2px solid #e3e6ed;border-radius:4px"></div>
<div class="t" style="left:464.70000000000005px;top:501.2500000000001px;line-height:40px;font-size:22.4px;color:#222;font-weight:400;">钻石团长</div>
<div class="abs" style="left:766.5px;top:495.1500000000001px;width:159px;height:50px;border:2px solid #e3e6ed;border-radius:4px"></div>
<div class="t" style="left:785px;top:501.2500000000001px;line-height:40px;font-size:22.4px;color:#222;font-weight:400;">10000</div>
<div class="t" style="left:933.5999999999999px;top:501.2500000000001px;line-height:40px;font-size:22.4px;color:#222;font-weight:400;">成长值</div>
<div class="t" style="left:1104px;top:504.2500000000001px;line-height:40px;font-size:22.4px;color:#222;font-weight:400;">8.5折</div>
<div class="t" style="left:1296px;top:504.2500000000001px;line-height:40px;font-size:22.4px;color:#222;font-weight:400;">2.00倍</div>
<div class="abs" style="left:1486px;top:510.6500000000001px;width:26px;height:25px;border-radius:4px;background:#1651f0"></div>
<svg class="abs" style="left:1490px;top:514.6500000000001px" width="18" height="17" viewBox="0 0 18 17" fill="none" stroke="#fff" stroke-width="3" stroke-linecap="round" stroke-linejoin="round"><path d="M3 8.5 L7.5 12.5 L15 4.5"/></svg>
<div class="t" style="left:18.40000000000009px;top:617.65px;line-height:40px;font-size:21.8px;color:#ea5c10;font-weight:400;-webkit-text-stroke:0.65px #ea5c10;letter-spacing:0.9px;">vip5</div>
<svg class="abs" style="left:174.4000000000001px;top:616.0px;overflow:visible" width="42" height="32" viewBox="0 0 42 32"><path d="M9.8 0 H29.6 L39.2 10.65 L19.6 30 L0 10.65 Z" fill="url(#gemg)"/><path d="M9.8 0 H19.6 V30 L0 10.65 Z" fill="#fff" fill-opacity="0.12"/><path d="M7.5 9.1 H14 L19.55 14.8 L25.8 9.1 H30.7 L19.55 21.1 Z" fill="#fff"/><path d="M19.55 14.8 L25.8 9.1 H30.7 L19.55 21.1 Z" fill="#fff4d8"/><text x="32.5" y="27.6" text-anchor="middle" style="font-family:'Liberation Sans',sans-serif;font-weight:700;font-size:23.3px" fill="#fff" stroke="#f3a431" stroke-width="4" stroke-linejoin="round" paint-order="stroke">5</text></svg>
<div class="abs" style="left:287px;top:608.55px;width:88px;height:46px;border-radius:5px;background:linear-gradient(103deg,#9769c7 0%,#9769c7 20%,#c8aee2 52%,#dcc9ee 73%,#c8aee2 80%,#9462c4 100%)"></div>
<div class="abs" style="left:446.5px;top:608.55px;width:159.5px;height:51px;border:2px solid #e3e6ed;border-radius:4px"></div>
<div class="t" style="left:464.70000000000005px;top:615.15px;line-height:40px;font-size:22.4px;color:#222;font-weight:400;">至尊团长</div>
<div class="abs" style="left:766.5px;top:609.05px;width:159px;height:50px;border:2px solid #e3e6ed;border-radius:4px"></div>
<div class="t" style="left:785px;top:615.15px;line-height:40px;font-size:22.4px;color:#222;font-weight:400;">20000</div>
<div class="t" style="left:933.5999999999999px;top:615.15px;line-height:40px;font-size:22.4px;color:#222;font-weight:400;">成长值</div>
<div class="t" style="left:1104px;top:618.15px;line-height:40px;font-size:22.4px;color:#222;font-weight:400;">8折</div>
<div class="t" style="left:1296px;top:618.15px;line-height:40px;font-size:22.4px;color:#222;font-weight:400;">2.50倍</div>
<div class="abs" style="left:1486px;top:624.55px;width:26px;height:25px;border-radius:4px;background:#1651f0"></div>
<svg class="abs" style="left:1490px;top:628.55px" width="18" height="17" viewBox="0 0 18 17" fill="none" stroke="#fff" stroke-width="3" stroke-linecap="round" stroke-linejoin="round"><path d="M3 8.5 L7.5 12.5 L15 4.5"/></svg>
<div class="t" style="left:18.40000000000009px;top:731.5500000000001px;line-height:40px;font-size:21.8px;color:#ea5c10;font-weight:400;-webkit-text-stroke:0.65px #ea5c10;letter-spacing:0.9px;">vip6</div>
<svg class="abs" style="left:174.4000000000001px;top:729.9000000000001px;overflow:visible" width="42" height="32" viewBox="0 0 42 32"><path d="M9.8 0 H29.6 L39.2 10.65 L19.6 30 L0 10.65 Z" fill="url(#gemg)"/><path d="M9.8 0 H19.6 V30 L0 10.65 Z" fill="#fff" fill-opacity="0.12"/><path d="M7.5 9.1 H14 L19.55 14.8 L25.8 9.1 H30.7 L19.55 21.1 Z" fill="#fff"/><path d="M19.55 14.8 L25.8 9.1 H30.7 L19.55 21.1 Z" fill="#fff4d8"/><text x="32.5" y="27.6" text-anchor="middle" style="font-family:'Liberation Sans',sans-serif;font-weight:700;font-size:23.3px" fill="#fff" stroke="#f3a431" stroke-width="4" stroke-linejoin="round" paint-order="stroke">6</text></svg>
<div class="abs" style="left:287px;top:722.45px;width:88px;height:46px;border-radius:5px;background:linear-gradient(103deg,#bc9161 0%,#bc9161 20%,#d8c0a4 52%,#e5d6c6 73%,#d8c0a4 80%,#b78b5b 100%)"></div>
<div class="abs" style="left:446.5px;top:722.45px;width:159.5px;height:51px;border:2px solid #e3e6ed;border-radius:4px"></div>
<div class="t" style="left:464.70000000000005px;top:729.0500000000001px;line-height:40px;font-size:22.4px;color:#222;font-weight:400;">永久团长</div>
<div class="abs" style="left:766.5px;top:722.95px;width:159px;height:50px;border:2px solid #e3e6ed;border-radius:4px"></div>
<div class="t" style="left:785px;top:729.0500000000001px;line-height:40px;font-size:22.4px;color:#222;font-weight:400;">30000</div>
<div class="t" style="left:933.5999999999999px;top:729.0500000000001px;line-height:40px;font-size:22.4px;color:#222;font-weight:400;">成长值</div>
<div class="t" style="left:1104px;top:732.0500000000001px;line-height:40px;font-size:22.4px;color:#222;font-weight:400;">7.5折</div>
<div class="t" style="left:1296px;top:732.0500000000001px;line-height:40px;font-size:22.4px;color:#222;font-weight:400;">3.00倍</div>
<div class="abs" style="left:1486px;top:738.45px;width:26px;height:25px;border-radius:4px;background:#1651f0"></div>
<svg class="abs" style="left:1490px;top:742.45px" width="18" height="17" viewBox="0 0 18 17" fill="none" stroke="#fff" stroke-width="3" stroke-linecap="round" stroke-linejoin="round"><path d="M3 8.5 L7.5 12.5 L15 4.5"/></svg>
<div class="abs" style="left:1504px;top:0;width:20px;height:810px;background:linear-gradient(to right,rgba(0,0,0,0),rgba(0,0,0,0.05))"></div>
<div class="abs" style="left:1523.75px;top:0;width:200px;height:810px;background:#fff"></div>
<div class="abs" style="left:1523.75px;top:123.5px;width:200px;height:2px;background:#eceef4"></div>
<div class="abs" style="left:1523.75px;top:237.39999999999998px;width:200px;height:2px;background:#eceef4"></div>
<div class="abs" style="left:1523.75px;top:351.29999999999995px;width:200px;height:2px;background:#eceef4"></div>
<div class="abs" style="left:1523.75px;top:465.20000000000005px;width:200px;height:2px;background:#eceef4"></div>
<div class="abs" style="left:1523.75px;top:579.1px;width:200px;height:2px;background:#eceef4"></div>
<div class="abs" style="left:1523.75px;top:693.0px;width:200px;height:2px;background:#eceef4"></div>
<div class="t" style="left:1544px;top:42.6px;line-height:40px;font-size:22.4px;color:#222;font-weight:400;-webkit-text-stroke:0.55px #222;">操作</div>
<div class="t" style="left:1547.5px;top:732.0500000000001px;line-height:40px;font-size:22.4px;color:#1f5ef5;font-weight:400;">删除</div>
<div class="abs" style="left:1px;top:795px;width:1570px;height:12px;background:linear-gradient(to bottom,rgba(0,0,0,0),rgba(0,0,0,0.025))"></div>
</div>
<div class="t" style="left:39px;top:1252.1px;line-height:40px;font-size:25.1px;color:#222;font-weight:400;-webkit-text-stroke:0.55px #222;">成长值设置</div>
<div class="abs" style="left:0;top:0;width:1724px;height:1673px;overflow:hidden">
<div class="t" style="left:62.5px;top:1323.1px;line-height:40px;font-size:22.4px;color:#f56c6c;font-weight:400;">*</div>
<div class="t" style="left:78px;top:1322.1px;line-height:40px;font-size:22.4px;color:#222;font-weight:400;">完成下单</div>
<div class="abs" style="left:186px;top:1328px;width:26px;height:26px;border-radius:50%;box-shadow:inset 0 0 0 1.6px #1654f0;background:#fff"></div><div class="abs" style="left:192.5px;top:1334.5px;width:13px;height:13px;border-radius:50%;background:#1654f0"></div>
<div class="t" style="left:225.79999999999995px;top:1322.1px;line-height:40px;font-size:22.4px;color:#222;font-weight:400;">是</div>
<div class="abs" style="left:294.70000000000005px;top:1328px;width:26px;height:26px;border-radius:50%;box-shadow:inset 0 0 0 1.6px #dcdfe6;background:#fff"></div>
<div class="t" style="left:334px;top:1322.1px;line-height:40px;font-size:22.4px;color:#222;font-weight:400;">否</div>
<div class="t" style="left:62.5px;top:1487.3999999999999px;line-height:40px;font-size:22.4px;color:#f56c6c;font-weight:400;">*</div>
<div class="t" style="left:78px;top:1486.3999999999999px;line-height:40px;font-size:22.4px;color:#222;font-weight:400;">完善信息</div>
<div class="abs" style="left:186px;top:1492.3px;width:26px;height:26px;border-radius:50%;box-shadow:inset 0 0 0 1.6px #1654f0;background:#fff"></div><div class="abs" style="left:192.5px;top:1498.8px;width:13px;height:13px;border-radius:50%;background:#1654f0"></div>
<div class="t" style="left:225.79999999999995px;top:1486.3999999999999px;line-height:40px;font-size:22.4px;color:#222;font-weight:400;">是</div>
<div class="abs" style="left:294.70000000000005px;top:1492.3px;width:26px;height:26px;border-radius:50%;box-shadow:inset 0 0 0 1.6px #dcdfe6;background:#fff"></div>
<div class="t" style="left:334px;top:1486.3999999999999px;line-height:40px;font-size:22.4px;color:#222;font-weight:400;">否</div>
<div class="t" style="left:39.799999999999955px;top:1651.6999999999998px;line-height:40px;font-size:22.4px;color:#f56c6c;font-weight:400;">*</div>
<div class="t" style="left:56.299999999999955px;top:1650.6999999999998px;line-height:40px;font-size:22.4px;color:#222;font-weight:400;">绑定手机号</div>
<div class="abs" style="left:186px;top:1656.6px;width:26px;height:26px;border-radius:50%;box-shadow:inset 0 0 0 1.6px #1654f0;background:#fff"></div><div class="abs" style="left:192.5px;top:1663.1px;width:13px;height:13px;border-radius:50%;background:#1654f0"></div>
<div class="t" style="left:225.79999999999995px;top:1650.6999999999998px;line-height:40px;font-size:22.4px;color:#222;font-weight:400;">是</div>
<div class="abs" style="left:294.70000000000005px;top:1656.6px;width:26px;height:26px;border-radius:50%;box-shadow:inset 0 0 0 1.6px #dcdfe6;background:#fff"></div>
<div class="t" style="left:334px;top:1650.6999999999998px;line-height:40px;font-size:22.4px;color:#222;font-weight:400;">否</div>
<div class="t" style="left:187px;top:1393.3999999999999px;line-height:40px;font-size:22.4px;color:#333;font-weight:400;">每完成</div>
<div class="abs" style="left:270.29999999999995px;top:1390.5px;width:159.5px;height:50.5px;border:2px solid #e3e6ed;border-radius:4px"></div><div class="t" style="left:289.29999999999995px;top:1396.6px;line-height:40px;font-size:22.4px;color:#222;font-weight:400;">1</div>
<div class="t" style="left:446.5px;top:1393.3999999999999px;line-height:40px;font-size:22.4px;color:#333;font-weight:400;">笔订单，获得</div>
<div class="abs" style="left:596px;top:1390.5px;width:159.5px;height:50.5px;border:2px solid #e3e6ed;border-radius:4px"></div><div class="t" style="left:615px;top:1396.6px;line-height:40px;font-size:22.4px;color:#222;font-weight:400;">1</div>
<div class="t" style="left:772px;top:1393.3999999999999px;line-height:40px;font-size:22.4px;color:#333;font-weight:400;">成长值</div>
<div class="t" style="left:187px;top:1557.6px;line-height:40px;font-size:22.4px;color:#333;font-weight:400;">完成后赠送:</div>
<div class="abs" style="left:337px;top:1553px;width:159.5px;height:50.5px;border:2px solid #e3e6ed;border-radius:4px"></div><div class="t" style="left:356px;top:1559.1px;line-height:40px;font-size:22.4px;color:#222;font-weight:400;">1</div>
<div class="t" style="left:513px;top:1557.6px;line-height:40px;font-size:22.4px;color:#333;font-weight:400;">成长值</div>
</div>
<div class="abs" style="left:0;top:1673.5px;width:1724px;height:71px;background:linear-gradient(to bottom,#fff 20%,#fafafb)"></div><div class="abs" style="left:0;top:1673.5px;width:1724px;height:1.5px;background:#eceef1"></div>
<div class="abs" style="left:1526.4px;top:1688px;width:93.4px;height:50.5px;box-shadow:inset 0 0 0 1.6px #dcdfe6;border-radius:5px;background:transparent"></div>
<div class="t" style="left:1551px;top:1694.1px;line-height:40px;font-size:22.4px;color:#222;font-weight:400;">取消</div>
<div class="abs" style="left:1640px;top:1688px;width:93px;height:50.5px;border-radius:5px;background:#1652f0"></div>
<div class="t" style="left:1665px;top:1694.1px;line-height:40px;font-size:22.4px;color:#fff;font-weight:400;">确认</div>
</div>
<div class="abs" style="left:0;top:1650px;width:3138px;height:94px;background:linear-gradient(to bottom,rgba(0,0,0,0),rgba(0,0,0,0.025))"></div>
</div></body></html>
